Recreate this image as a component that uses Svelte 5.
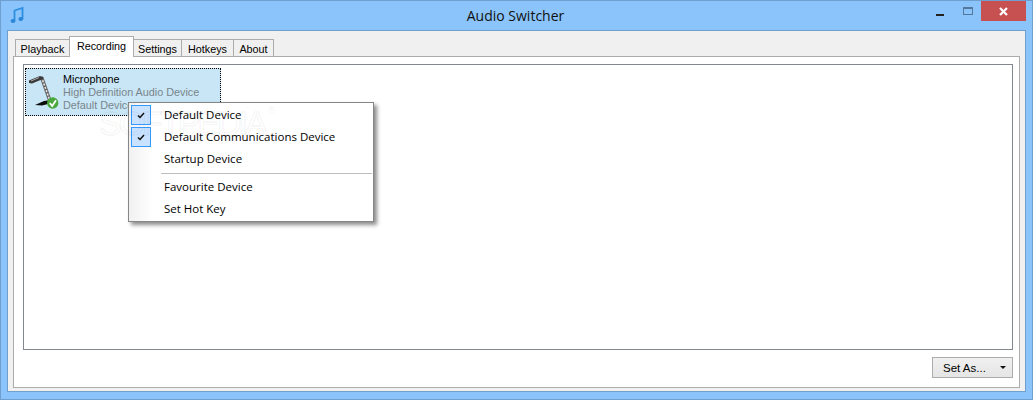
<script>
  const tabs = [
    { label: 'Playback', w: 55 },
    { label: 'Recording', w: 65, active: true },
    { label: 'Settings', w: 49 },
    { label: 'Hotkeys', w: 53 },
    { label: 'About', w: 41 }
  ];
  const menuTop = [
    { label: 'Default Device', checked: true },
    { label: 'Default Communications Device', checked: true },
    { label: 'Startup Device' }
  ];
  const menuBottom = ['Favourite Device', 'Set Hot Key'];
</script>

<div class="window">
  <header class="titlebar">
    <svg class="appicon" width="14" height="18" viewBox="0 0 14 18">
      <path d="M4.5 4.5 L12.5 2 V13" fill="none" stroke="#2c8fe0" stroke-width="1.8"/>
      <path d="M4.5 4 V15" stroke="#2c8fe0" stroke-width="1.8"/>
      <ellipse cx="3" cy="15" rx="2.4" ry="2" fill="#2a86d8"/>
      <ellipse cx="10.8" cy="13" rx="2.4" ry="2" fill="#2a86d8"/>
    </svg>
    <div class="title">Audio Switcher</div>
    <div class="controls">
      <div class="ctl min"><span></span></div>
      <div class="ctl max"><span></span></div>
      <div class="ctl close">
        <svg width="9" height="9" viewBox="0 0 9 9"><path d="M1 1 L8 8 M8 1 L1 8" stroke="#fff" stroke-width="2.2"/></svg>
      </div>
    </div>
  </header>

  <main class="client">
    <nav class="tabs">
      {#each tabs as t}
        <div class="tab" class:active={t.active} style="width:{t.w}px">{t.label}</div>
      {/each}
    </nav>
    <section class="panel">
      <div class="list">
        <div class="device">
          <svg class="mic" width="32" height="40" viewBox="0 0 32 40">
            <path d="M13.5 5 L22 29" stroke="#666" stroke-width="3.6"/>
            <path d="M13.5 5 L22 29" stroke="#e8e8e8" stroke-width="1.5" stroke-dasharray="2 1.5"/>
            <path d="M1 8.5 L12 4 L15 5 L15 7 L4 11.5 L1 11 Z" fill="#3a3a3a"/>
            <path d="M3 9 L11 5.6" stroke="#aaa" stroke-width="1"/>
            <path d="M7 33 L16 29 L23 28 L24 31 L14 33.5 Z" fill="#0c0c0c"/>
            <circle cx="24.7" cy="31" r="5.7" fill="#4aa83c"/>
            <path d="M21.8 31 L24.2 34 L28 28.3" fill="none" stroke="#fff" stroke-width="1.8"/>
          </svg>
          <div class="lines">
            <div class="name">Microphone</div>
            <div class="sub">High Definition Audio Device</div>
            <div class="sub">Default Device</div>
          </div>
        </div>
      </div>
      <div class="actions">
        <div class="setas"><span>Set As...</span><i class="caret"></i></div>
      </div>
    </section>
  </main>

  <div class="menu">
    {#each menuTop as m}
      <div class="item">
        <div class="gutter">
          {#if m.checked}
            <div class="check">
              <svg width="8" height="7" viewBox="0 0 8 7"><path d="M1 3.5 L3 5.5 L7 1" fill="none" stroke="#111" stroke-width="1.5"/></svg>
            </div>
          {/if}
        </div>
        <span>{m.label}</span>
      </div>
    {/each}
    <div class="sep"></div>
    {#each menuBottom as m}
      <div class="item"><div class="gutter"></div><span>{m}</span></div>
    {/each}
  </div>

  <div class="watermark">SOFTPEDIA<sup>®</sup></div>
</div>

<style>
  :global(body) { margin: 0; }
  .window {
    position: relative;
    box-sizing: border-box;
    width: 1033px;
    height: 400px;
    background: #8ac4fb;
    border: 1px solid #6f9fcf;
    display: flex;
    flex-direction: column;
    overflow: hidden;
    font-family: "Liberation Sans", sans-serif;
    font-size: 10.8px;
    color: #000;
  }
  .titlebar {
    height: 29px;
    flex: none;
    position: relative;
    display: flex;
    align-items: center;
    justify-content: center;
  }
  .appicon { position: absolute; left: 9px; top: 5px; }
  .title { font-family: "Open Sans", sans-serif; font-size: 14px; color: #111; margin-top: -1px; margin-left: -2px; }
  .controls { position: absolute; right: 6px; top: 0; display: flex; }
  .ctl { height: 20px; display: flex; align-items: center; justify-content: center; }
  .min { width: 29px; }
  .min span { width: 8px; height: 2px; background: #222; margin-top: 7px; }
  .max { width: 27px; }
  .max span { box-sizing: border-box; width: 10px; height: 8px; border: 1px solid #54789c; border-top-width: 2px; margin-top: 0; }
  .close { width: 45px; background: #c75050; }
  .client {
    flex: 1;
    margin: 0 6px 7px;
    background: #f0f0f0;
    border: 1px solid #6f9fcf;
    padding: 4px 5px 3px;
    display: flex;
    flex-direction: column;
    min-height: 0;
  }
  .tabs { display: flex; height: 21px; padding-left: 3px; flex: none; align-items: flex-end; position: relative; z-index: 1; }
  .tab {
    box-sizing: border-box;
    height: 17px;
    border: 1px solid #acacac;
    border-bottom: 0;
    background: #f0f0f0;
    text-align: center;
    line-height: 16px;
    margin-left: -1px;
    padding-top: 1px;
  }
  .tab.active { background: #fff; line-height: 18px; margin-bottom: -1px; z-index: 1; position: relative; height: 21px; padding-top: 0; }
  .panel {
    flex: 1;
    box-sizing: border-box;
    background: #fff;
    border: 1px solid #acacac;
    padding: 7px 6px 9px 9px;
    display: flex;
    flex-direction: column;
    min-height: 0;
  }
  .list {
    flex: 1;
    box-sizing: border-box;
    border: 1px solid #828790;
    padding: 3px 0 0 1px;
    min-height: 0;
  }
  .device {
    box-sizing: border-box;
    width: 196px;
    height: 48px;
    background: #c8e6f5;
    outline: 1px dotted #000;
    outline-offset: -1px;
    display: flex;
    padding: 3px 0 0 3px;
  }
  .mic { flex: none; margin-top: 1px; }
  .lines { margin-left: 3px; line-height: 13px; margin-top: 2px; white-space: nowrap; }
  .name { color: #000; }
  .sub { color: #7a858c; }
  .actions { flex: none; display: flex; justify-content: flex-end; padding-top: 7px; }
  .setas {
    box-sizing: border-box;
    width: 81px;
    height: 21px;
    border: 1px solid #acacac;
    background: linear-gradient(#f0f0f0, #e5e5e5);
    display: flex;
    align-items: center;
    padding: 0 6px 0 10px;
    justify-content: space-between;
    font-size: 11.5px;
  }
  .caret { width: 0; height: 0; border-style: solid; border-color: #111 transparent transparent; border-width: 3px 3.5px 0; }
  .menu {
    position: absolute;
    left: 127px;
    top: 101px;
    box-sizing: border-box;
    width: 246px;
    height: 120px;
    background: #fff;
    border: 1px solid #868686;
    box-shadow: 3px 3px 4px rgba(0,0,0,.45);
    padding: 1px 2px;
    z-index: 2;
    font-family: "Open Sans", sans-serif;
    font-size: 11.5px;
  }
  .menu::before {
    content: "";
    position: absolute;
    left: 0; top: 0; bottom: 0;
    width: 25px;
    background: linear-gradient(90deg, #f1f1f1, #fff);
  }
  .item { position: relative; height: 22px; display: flex; align-items: center; white-space: nowrap; }
  .item span { margin-top: -2px; }
  .gutter { width: 33px; flex: none; height: 22px; display: flex; align-items: center; }
  .check {
    box-sizing: border-box;
    width: 20px;
    height: 20px;
    background: #c8e2ff;
    border: 1px solid #3399ff;
    display: flex;
    align-items: center;
    justify-content: center;
  }
  .sep { position: relative; height: 1px; background: #bdbdbd; margin: 3px -1px 2px 30px; }
  .watermark {
    position: absolute;
    left: 98px;
    top: 103px;
    font-size: 34px;
    letter-spacing: -3px;
    color: rgba(0,0,0,.015);
    -webkit-text-stroke: 1.5px rgba(0,0,0,.05);
    z-index: 3;
    white-space: nowrap;
  }
  .watermark sup { font-size: 11px; vertical-align: top; letter-spacing: 0; -webkit-text-stroke: 0; color: rgba(0,0,0,.07); margin-left: 3px; }
</style>
